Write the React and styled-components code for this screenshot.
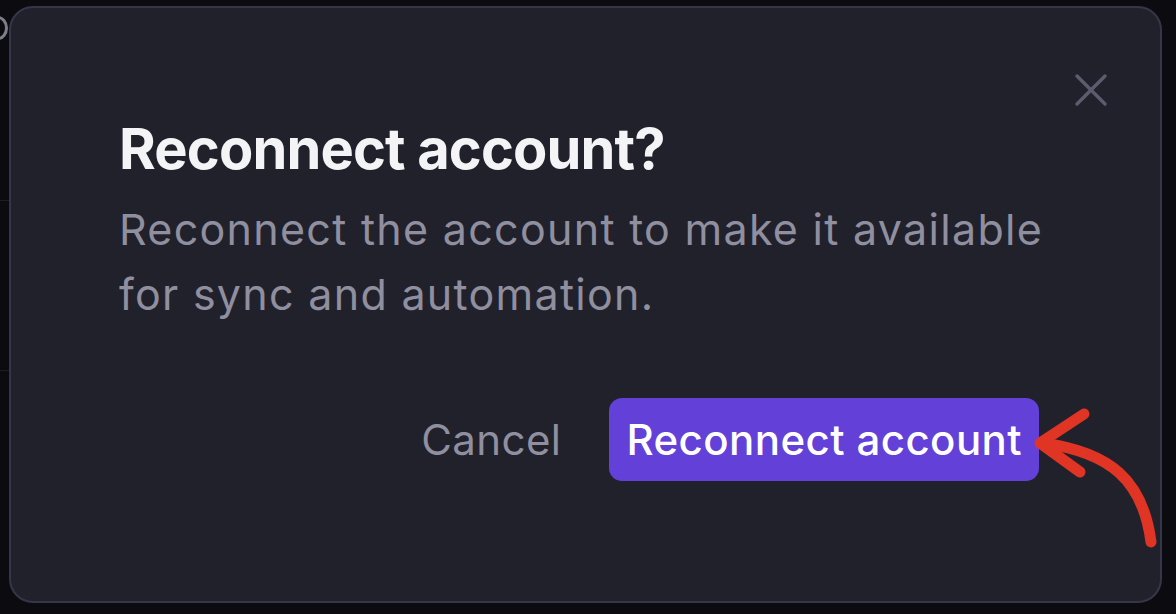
import styled, { createGlobalStyle } from 'styled-components';

const Global = createGlobalStyle`
    html, body {
        margin: 0;
        padding: 0;
        background: #0c0c10;
    }
    body {
        font-family: Inter, "Noto Sans", "Liberation Sans", sans-serif;
        -webkit-font-smoothing: antialiased;
    }
`;

export default function App() {
    return (
        <Page>
            <Global />
            <Behind>
                <Fragment />
                <Rule top={200} />
                <Rule top={370} />
            </Behind>
            <Dialog>
                <CloseButton aria-label="Close">
                    <svg width="34" height="34" viewBox="0 0 34 34" fill="none">
                        <path d="M3 3L31 31M31 3L3 31" stroke="#5c5c6e" strokeWidth="3.4" strokeLinecap="round" />
                    </svg>
                </CloseButton>
                <Title>Reconnect account?</Title>
                <Description>
                    Reconnect the account to make it available for sync and automation.
                </Description>
                <Footer>
                    <GhostButton>Cancel</GhostButton>
                    <PrimaryButton>Reconnect account</PrimaryButton>
                </Footer>
            </Dialog>
            <Arrow width="1176" height="614" viewBox="0 0 1176 614" fill="none">
                <path d="M1151 542 C1143 480 1110 452 1042 443" stroke="#e03424" strokeWidth="11" strokeLinecap="round" />
                <path d="M1084 414 L1040 443 L1080 472" stroke="#e03424" strokeWidth="11" strokeLinecap="round" strokeLinejoin="round" />
            </Arrow>
        </Page>
    );
}

const Page = styled.div`
    position: relative;
    box-sizing: border-box;
    width: 1176px;
    height: 614px;
    padding: 6px 14px 11px 9px;
    overflow: hidden;
`;

const Behind = styled.div`
    position: absolute;
    left: 0;
    top: 0;
    width: 9px;
    height: 614px;
    overflow: hidden;
`;

// cut-off glyph of the page behind the dialog
const Fragment = styled.div`
    position: absolute;
    left: -12px;
    top: 16px;
    width: 14px;
    height: 18px;
    border: 3px solid #7e7e8a;
    border-radius: 50%;
`;

const Rule = styled.div`
    position: absolute;
    left: 0;
    top: ${p => p.top}px;
    width: 9px;
    height: 1px;
    background: #1c1c24;
`;

const Dialog = styled.div`
    position: relative;
    box-sizing: border-box;
    height: 100%;
    display: flex;
    flex-direction: column;
    padding: 108px 50px 120px 108px;
    background: #21212c;
    border: 2px solid #36364a;
    border-radius: 24px;
`;

const CloseButton = styled.button`
    position: absolute;
    top: 63px;
    right: 50px;
    display: flex;
    padding: 2px;
    background: none;
    border: none;
`;

const Title = styled.h2`
    margin: 0;
    font-size: 56px;
    line-height: 66px;
    font-weight: 700;
    letter-spacing: -0.015em;
    color: #f4f4f6;
`;

const Description = styled.p`
    margin: 15px 0 0;
    max-width: 960px;
    font-size: 43px;
    line-height: 65px;
    font-weight: 400;
    letter-spacing: 0.03em;
    color: #8f8f9f;
`;

const Footer = styled.div`
    margin-top: auto;
    padding-right: 71px;
    display: flex;
    justify-content: flex-end;
    align-items: center;
    gap: 48px;
`;

const GhostButton = styled.button`
    padding: 0;
    background: none;
    border: none;
    font-family: inherit;
    font-size: 42px;
    letter-spacing: 0.01em;
    color: #8f8f9f;
`;

const PrimaryButton = styled.button`
    height: 83px;
    padding: 0 17px;
    background: #6340d8;
    border: none;
    border-radius: 13px;
    font-family: inherit;
    font-size: 42px;
    font-weight: 500;
    letter-spacing: 0.01em;
    color: #ffffff;
`;

const Arrow = styled.svg`
    position: absolute;
    left: 0;
    top: 0;
    pointer-events: none;
`;
